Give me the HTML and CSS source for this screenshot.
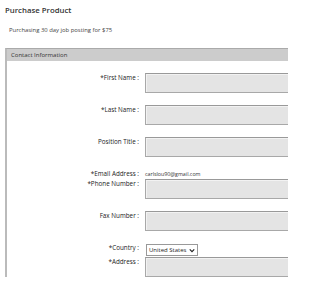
FILE: index.html
```html
<!DOCTYPE html>
<html>
<head>
<meta charset="utf-8">
<link rel="stylesheet" href="styles.css">
</head>
<body>
<div class="page">
  <h1 class="title">Purchase Product</h1>
  <p class="intro">Purchasing 30 day job posting for $75</p>
  <div class="box">
    <div class="box-head">Contact Information</div>
    <div class="form">
      <div class="row"><label class="lbl">*First Name :</label><div class="ctl"><div class="input"></div></div></div>
      <div class="row"><label class="lbl">*Last Name :</label><div class="ctl"><div class="input"></div></div></div>
      <div class="row"><label class="lbl">Position Title :</label><div class="ctl"><div class="input"></div></div></div>
      <div class="row tight"><label class="lbl">*Email Address :</label><div class="ctl"><span class="value">carlslou90@gmail.com</span></div></div>
      <div class="row"><label class="lbl">*Phone Number :</label><div class="ctl"><div class="input"></div></div></div>
      <div class="row"><label class="lbl">Fax Number :</label><div class="ctl"><div class="input"></div></div></div>
      <div class="row tight"><label class="lbl">*Country :</label><div class="ctl"><div class="select">United States <svg class="chev" viewBox="0 0 8 6" width="6" height="5"><path d="M1 1.5 L4 4.5 L7 1.5" fill="none" stroke="#222" stroke-width="1.6"/></svg></div></div></div>
      <div class="row"><label class="lbl">*Address :</label><div class="ctl"><div class="input"></div></div></div>
    </div>
  </div>
</div>
</body>
</html>
```
FILE: styles.css
```css
html, body {
  margin: 0;
  padding: 0;
  overflow: hidden;
  background: #fff;
}
body {
  font-family: "Open Sans", "Liberation Sans", sans-serif;
  color: #333;
  width: 288px;
  height: 288px;
}
.page {
  padding: 4px 0 0 5px;
}
.title {
  margin: 0;
  font-size: 7.8px;
  font-weight: 600;
  line-height: 12px;
  color: #333;
}
.intro {
  margin: 10px 0 0 4px;
  font-size: 5.9px;
  line-height: 9px;
  color: #444;
}
.box {
  margin-top: 13px;
  width: 330px;
  border-left: 2px solid #bbb;
  border-top: 1px solid #aaa;
}
.box-head {
  background: #cccccc;
  font-size: 6px;
  line-height: 12px;
  padding-left: 4px;
  color: #333;
}
.form {
  padding-top: 12px;
}
.row {
  display: flex;
  align-items: flex-start;
  margin-bottom: 12px;
}
.row.tight {
  margin-bottom: 0;
}
.lbl {
  width: 132px;
  text-align: right;
  font-size: 6.3px;
  line-height: 10px;
  color: #222;
  flex-shrink: 0;
}
.ctl {
  margin-left: 6px;
  flex: 1;
  font-size: 6px;
  line-height: 10px;
}
.input {
  height: 18px;
  border: 1px solid #a8a8a8;
  border-top-color: #999;
  background: #e4e4e4;
  box-shadow: inset 1px 1px 0 #f2f2f2;
}
.value {
  font-size: 5.3px;
  line-height: 10px;
  color: #333;
  display: block;
}
.select {
  display: flex;
  width: fit-content;
  align-items: center;
  gap: 2px;
  height: 10px;
  margin: 1px 0 1px 1px;
  padding: 0 2px;
  border: 1px solid #999;
  background: #fff;
  font-size: 6px;
  line-height: 10px;
  color: #222;
}
.chev {
  margin-left: 1px;
}
```
